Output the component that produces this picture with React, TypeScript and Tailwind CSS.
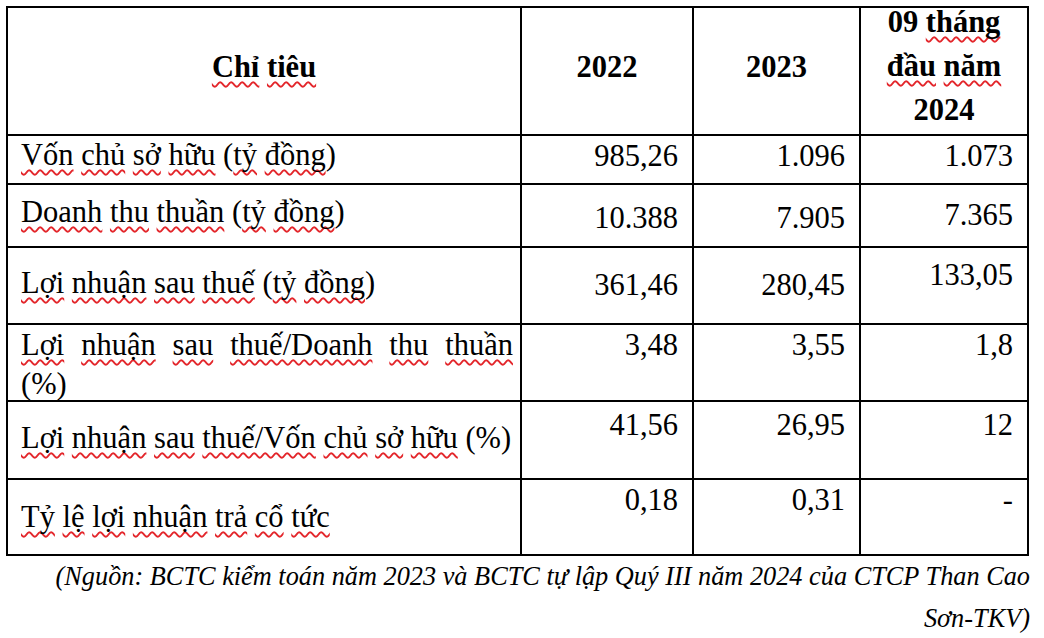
import React from "react";

function W({ children }: { children: React.ReactNode }) {
  return (
    <span className="underline decoration-wavy decoration-[#e3262b] decoration-[1.5px] underline-offset-[4px] [text-decoration-skip-ink:none]">
      {children}
    </span>
  );
}

function Words({ text }: { text: string }) {
  const parts = text.split(" ");
  return (
    <>
      {parts.map((p, i) => (
        <React.Fragment key={i}>
          <W>{p}</W>
          {i < parts.length - 1 ? " " : ""}
        </React.Fragment>
      ))}
    </>
  );
}

function Unit() {
  return (
    <>
      {" ("}
      <W>tỷ</W> <W>đồng</W>
      {")"}
    </>
  );
}

export default function App() {
  return (
    <div className="font-['Liberation_Serif'] w-[1044px] h-[638px] bg-white overflow-hidden text-black">
      <div className="ml-[6px] mt-[6px] w-fit grid grid-cols-[512px_170px_165px_166px] grid-rows-[126px_47px_61px_75px_75px_76px_74px] gap-[2px] bg-black p-[2px] text-[30.5px] leading-[38px]">
        <div className="bg-white font-bold text-center pt-[40px]">
          <Words text="Chỉ tiêu" />
        </div>
        <div className="bg-white font-bold text-center pt-[40px]">2022</div>
        <div className="bg-white font-bold text-center pt-[40px]">2023</div>
        <div className="bg-white font-bold text-center leading-[44px]">
          <div className="-mt-[8px]">
            09 <W>tháng</W>
            <br />
            <W>đầu</W> <W>năm</W>
            <br />
            2024
          </div>
        </div>

        <div className="bg-white pl-[13px]">
          <Words text="Vốn chủ sở hữu" />
          <Unit />
        </div>
        <div className="bg-white text-right pr-[14px] pt-[1px]">985,26</div>
        <div className="bg-white text-right pr-[14px] pt-[1px]">1.096</div>
        <div className="bg-white text-right pr-[14px] pt-[1px]">1.073</div>

        <div className="bg-white pl-[13px] pt-[8px]">
          <Words text="Doanh thu thuần" />
          <Unit />
        </div>
        <div className="bg-white text-right pr-[14px] pt-[14px]">10.388</div>
        <div className="bg-white text-right pr-[14px] pt-[14px]">7.905</div>
        <div className="bg-white text-right pr-[14px] pt-[11px]">7.365</div>

        <div className="bg-white pl-[13px] pt-[16px]">
          <Words text="Lợi nhuận sau thuế" />
          <Unit />
        </div>
        <div className="bg-white text-right pr-[14px] pt-[18px]">361,46</div>
        <div className="bg-white text-right pr-[14px] pt-[18px]">280,45</div>
        <div className="bg-white text-right pr-[14px] pt-[8px]">133,05</div>

        <div className="bg-white pl-[13px] pr-[7px] pt-[1px] leading-[39px]">
          <div className="flex justify-between">
            <W>Lợi</W>
            <W>nhuận</W>
            <W>sau</W>
            <W>thuế/Doanh</W>
            <W>thu</W>
            <W>thuần</W>
          </div>
          <div>(%)</div>
        </div>
        <div className="bg-white text-right pr-[14px] pt-[1px]">3,48</div>
        <div className="bg-white text-right pr-[14px] pt-[1px]">3,55</div>
        <div className="bg-white text-right pr-[14px] pt-[1px]">1,8</div>

        <div className="bg-white pl-[13px] pt-[17px]">
          <Words text="Lợi nhuận sau thuế/Vốn chủ sở hữu" /> (%)
        </div>
        <div className="bg-white text-right pr-[14px] pt-[4px]">41,56</div>
        <div className="bg-white text-right pr-[14px] pt-[4px]">26,95</div>
        <div className="bg-white text-right pr-[14px] pt-[4px]">12</div>

        <div className="bg-white pl-[13px] pt-[18px]">
          <Words text="Tỷ lệ lợi nhuận trả cổ tức" />
        </div>
        <div className="bg-white text-right pr-[14px] pt-[1px]">0,18</div>
        <div className="bg-white text-right pr-[14px] pt-[1px]">0,31</div>
        <div className="bg-white text-right pr-[14px] pt-[1px]">-</div>
      </div>

      <div className="pr-[14px] text-right italic text-[26.3px] leading-[42px]">
        (Nguồn: BCTC kiểm toán năm 2023 và BCTC tự lập Quý III năm 2024 của CTCP Than Cao
        <br />
        Sơn-TKV)
      </div>
    </div>
  );
}
